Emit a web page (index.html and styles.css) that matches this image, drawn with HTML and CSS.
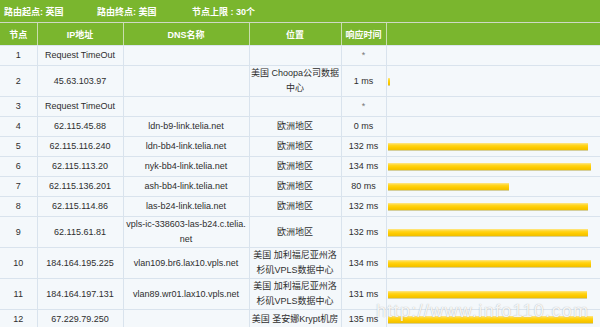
FILE: index.html
```html
<!DOCTYPE html>
<html lang="zh-CN">
<head>
<meta charset="utf-8">
<title>路由追踪</title>
<link rel="stylesheet" href="styles.css">
</head>
<body>
<div class="page">
  <div class="titlebar">
    <span class="ti ti-1">路由起点: 英国</span>
    <span class="ti ti-2">路由终点: 美国</span>
    <span class="ti">节点上限 : 30个</span>
  </div>
  <table class="trace">
    <colgroup>
      <col class="c-no"><col class="c-ip"><col class="c-dns"><col class="c-loc"><col class="c-ms"><col class="c-bar">
    </colgroup>
    <thead>
      <tr><th>节点</th><th>IP地址</th><th>DNS名称</th><th>位置</th><th>响应时间</th><th></th></tr>
    </thead>
    <tbody>
      <tr><td>1</td><td>Request TimeOut</td><td></td><td></td><td class="star">*</td><td class="barcell"></td></tr>
      <tr class="tall"><td>2</td><td>45.63.103.97</td><td></td><td>美国 Choopa公司数据中心</td><td>1 ms</td><td class="barcell"><span class="bar" style="width:2px"></span></td></tr>
      <tr><td>3</td><td>Request TimeOut</td><td></td><td></td><td class="star">*</td><td class="barcell"></td></tr>
      <tr><td>4</td><td>62.115.45.88</td><td>ldn-b9-link.telia.net</td><td>欧洲地区</td><td>0 ms</td><td class="barcell"></td></tr>
      <tr><td>5</td><td>62.115.116.240</td><td>ldn-bb4-link.telia.net</td><td>欧洲地区</td><td>132 ms</td><td class="barcell"><span class="bar" style="width:200px"></span></td></tr>
      <tr><td>6</td><td>62.115.113.20</td><td>nyk-bb4-link.telia.net</td><td>欧洲地区</td><td>134 ms</td><td class="barcell"><span class="bar" style="width:203px"></span></td></tr>
      <tr><td>7</td><td>62.115.136.201</td><td>ash-bb4-link.telia.net</td><td>欧洲地区</td><td>80 ms</td><td class="barcell"><span class="bar" style="width:121px"></span></td></tr>
      <tr><td>8</td><td>62.115.114.86</td><td>las-b24-link.telia.net</td><td>欧洲地区</td><td>132 ms</td><td class="barcell"><span class="bar" style="width:200px"></span></td></tr>
      <tr class="tall"><td>9</td><td>62.115.61.81</td><td class="nowrap">vpls-ic-338603-las-b24.c.telia.<br>net</td><td>欧洲地区</td><td>132 ms</td><td class="barcell"><span class="bar" style="width:200px"></span></td></tr>
      <tr class="tall"><td>10</td><td>184.164.195.225</td><td>vlan109.br6.lax10.vpls.net</td><td>美国 加利福尼亚州洛杉矶VPLS数据中心</td><td>134 ms</td><td class="barcell"><span class="bar" style="width:203px"></span></td></tr>
      <tr class="tall"><td>11</td><td>184.164.197.131</td><td>vlan89.wr01.lax10.vpls.net</td><td>美国 加利福尼亚州洛杉矶VPLS数据中心</td><td>131 ms</td><td class="barcell"><span class="bar" style="width:199px"></span></td></tr>
      <tr><td>12</td><td>67.229.79.250</td><td></td><td>美国 圣安娜Krypt机房</td><td>135 ms</td><td class="barcell"><span class="bar" style="width:205px"></span></td></tr>
      <tr><td></td><td></td><td></td><td></td><td></td><td class="barcell"></td></tr>
    </tbody>
  </table>
  <div class="watermark">http://www.info110.com</div>
</div>
</body>
</html>
```
FILE: styles.css
```css
html, body {
  margin: 0;
  padding: 0;
  background: #f4f8fb;
}
.page {
  position: relative;
  width: 600px;
  height: 327px;
  overflow: hidden;
  font-family: "Liberation Sans", "Noto Sans CJK SC", sans-serif;
  font-size: 9px;
  color: #2e2e2e;
}
.titlebar {
  display: flex;
  align-items: center;
  box-sizing: border-box;
  height: 23px;
  padding: 1px 0 0 4px;
  background: #7ab62e;
  border-bottom: 1px solid #cfd9c4;
  color: #fff;
  font-weight: bold;
}
.ti-1 { width: 93px; }
.ti-2 { width: 95px; }
.trace {
  width: 600px;
  table-layout: fixed;
  border-collapse: collapse;
}
.c-no { width: 37px; }
.c-ip { width: 86px; }
.c-dns { width: 126px; }
.c-loc { width: 92px; }
.c-ms { width: 45px; }
.trace th {
  height: 22px;
  padding: 0;
  background: #7ab62e;
  color: #fff;
  font-weight: bold;
  border-left: 1px solid #c9deae;
  border-bottom: 1px solid #dbe5ee;
}
.trace th:first-child { border-left: none; }
.trace td {
  height: 19px;
  padding: 0;
  line-height: 15px;
  text-align: center;
  vertical-align: middle;
  border-left: 1px solid #d9e3ed;
  border-bottom: 1px solid #d9e3ed;
  background: #f4f8fb;
}
.trace td:first-child { border-left: none; }
.trace tr.tall td { height: 30px; }
.trace td.nowrap { white-space: nowrap; }
.trace td.star { color: #777; }
.trace td.barcell {
  text-align: left;
  padding: 0 0 0 1px;
  font-size: 0;
  line-height: 0;
}
.bar {
  display: inline-block;
  height: 7px;
  background: linear-gradient(#ffe78a 0%, #ffd624 30%, #ffcc00 60%, #f0bf00 100%);
  box-shadow: 0 1px 0 #d5cf9c;
  vertical-align: middle;
}
.watermark {
  position: absolute;
  left: 376px;
  top: 301px;
  font-size: 18px;
  letter-spacing: 1.3px;
  color: rgba(255, 255, 255, 0.9);
  text-shadow: 0 0 1px rgba(110, 110, 110, 0.6);
  font-family: "Liberation Sans", sans-serif;
  white-space: nowrap;
}
```
